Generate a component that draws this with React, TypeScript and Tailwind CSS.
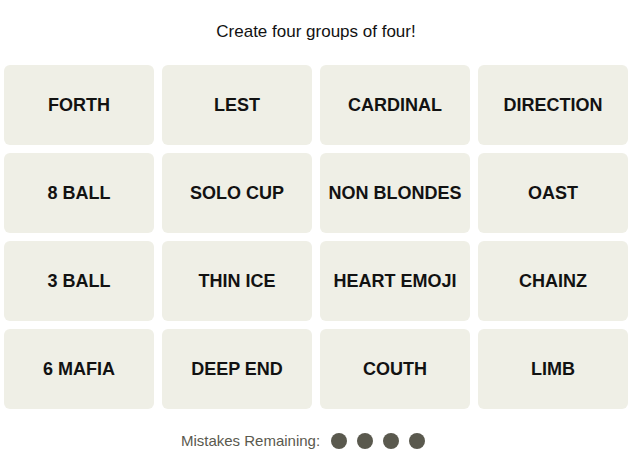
const words = [
  "FORTH",
  "LEST",
  "CARDINAL",
  "DIRECTION",
  "8 BALL",
  "SOLO CUP",
  "NON BLONDES",
  "OAST",
  "3 BALL",
  "THIN ICE",
  "HEART EMOJI",
  "CHAINZ",
  "6 MAFIA",
  "DEEP END",
  "COUTH",
  "LIMB",
];

export default function App() {
  return (
    <div className="w-[632px] h-[453px] bg-white font-['Liberation_Sans',Arial,sans-serif] text-[#121212]">
      {/* Header */}
      <div className="pt-[20px] h-[44px] text-center text-[17px] leading-[24px]">
        Create four groups of four!
      </div>

      {/* Board */}
      <div className="mt-[21px] px-[4px] grid grid-cols-4 gap-2">
        {words.map((w) => (
          <button
            key={w}
            className="h-[80px] rounded-[6px] bg-[#efefe6] flex items-center justify-center text-[18px] font-bold uppercase"
          >
            {w}
          </button>
        ))}
      </div>

      {/* Mistakes */}
      <div className="mt-[24px] pr-[26px] flex items-center justify-center gap-[11px] h-[16px]">
        <span className="text-[15px] text-[#5a594e]">Mistakes Remaining:</span>
        <div className="flex gap-[10px]">
          {[0, 1, 2, 3].map((i) => (
            <span key={i} className="w-4 h-4 rounded-full bg-[#5a594e]" />
          ))}
        </div>
      </div>
    </div>
  );
}
